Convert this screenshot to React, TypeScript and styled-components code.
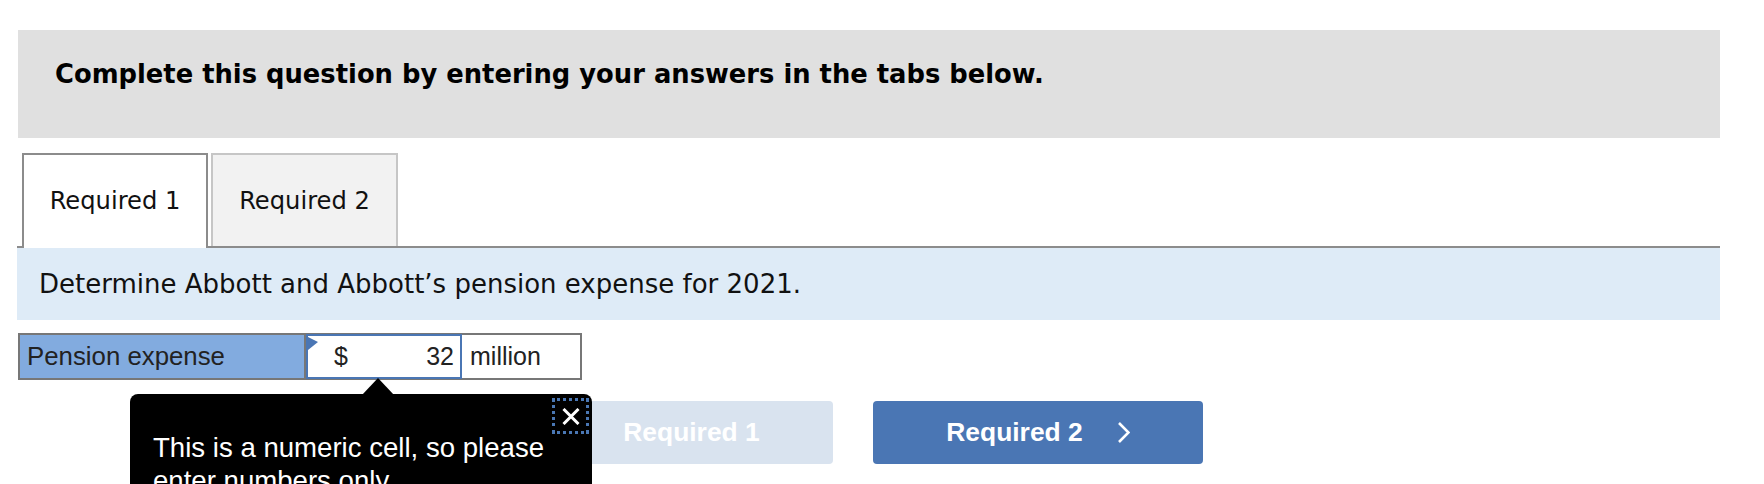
import React from 'react'
import styled, { createGlobalStyle } from 'styled-components'

const GlobalStyle = createGlobalStyle`
  html, body {
    margin: 0;
    padding: 0;
    background: #ffffff;
  }
`;

const Viewport = styled.div`
  height: 484px;
  overflow: hidden;
`;

const Page = styled.div`
  width: 1703px;
  padding: 30px 0 0 17px;
  font-family: "DejaVu Sans", Verdana, sans-serif;
`;

const Banner = styled.div`
  height: 108px;
  margin-left: 1px;
  box-sizing: border-box;
  padding: 30px 0 0 37px;
  background-color: #e0e0e0;
  font-weight: bold;
  font-size: 25.8px;
  line-height: 28px;
  color: #000;
`;

const TabBar = styled.div`
  display: flex;
  align-items: flex-end;
  gap: 3px;
  margin-top: 15px;
  padding-left: 5px;
  border-bottom: 2px solid #8c8c8c;
`;

const Tab = styled.div<{ $active?: boolean }>`
  box-sizing: border-box;
  width: ${p => (p.$active ? 186 : 187)}px;
  height: ${p => (p.$active ? 95 : 93)}px;
  margin-bottom: ${p => (p.$active ? -2 : 0)}px;
  display: flex;
  align-items: center;
  justify-content: center;
  padding-bottom: ${p => (p.$active ? 2 : 0)}px;
  border: 2px solid ${p => (p.$active ? '#8c8c8c' : '#c6c6c6')};
  border-bottom: none;
  background-color: ${p => (p.$active ? '#ffffff' : '#f2f2f2')};
  font-size: 24.2px;
  color: #111;
`;

const Instructions = styled.div`
  height: 72px;
  display: flex;
  align-items: center;
  padding-left: 22px;
  background-color: #deebf7;
  font-size: 26px;
  color: #111;
`;

const AnswerArea = styled.div`
  position: relative;
  margin: 13px 0 0 1px;
`;

const Row = styled.div`
  display: flex;
  width: 564px;
  height: 47px;
  box-sizing: border-box;
  border: 2px solid #777777;
  font-family: "Liberation Sans", Arial, sans-serif;
  font-size: 25px;
  color: #222;
`;

const LabelCell = styled.div`
  width: 286px;
  box-sizing: border-box;
  display: flex;
  align-items: center;
  padding-left: 7px;
  background-color: #82abdf;
  border-right: 2px solid #777777;
  font-size: 25.8px;
`;

const InputCell = styled.div`
  position: relative;
  width: 156px;
  margin: -1px 0;
  box-sizing: border-box;
  display: flex;
  align-items: center;
  justify-content: space-between;
  padding: 0 6px 0 26px;
  border: 2px solid #4a76b4;
  background: #ffffff;
`;

const Flag = styled.svg`
  position: absolute;
  top: 1px;
  left: 0;
`;

const UnitCell = styled.div`
  flex: 1;
  display: flex;
  align-items: center;
  padding-left: 8px;
  background: #ffffff;
`;

const Tooltip = styled.div`
  position: absolute;
  z-index: 2;
  left: 112px;
  top: 61px;
  width: 462px;
  box-sizing: border-box;
  padding: 37px 20px 30px 23px;
  border-radius: 8px;
  background: #000000;
  color: #ffffff;
  font-family: "Liberation Sans", Arial, sans-serif;
  font-size: 27.6px;
  line-height: 33px;

  &::before {
    content: "";
    position: absolute;
    left: 232px;
    top: -16px;
    border-left: 16px solid transparent;
    border-right: 16px solid transparent;
    border-bottom: 17px solid #000000;
  }
`;

const CloseBox = styled.div`
  position: absolute;
  top: 4px;
  right: 3px;
  width: 37px;
  height: 36px;
  box-sizing: border-box;
  display: flex;
  align-items: center;
  justify-content: center;
  border: 3px dotted #4a77b4;
`;

const ButtonRow = styled.div`
  display: flex;
  gap: 40px;
  margin: 21px 0 0 485px;
`;

const NavButton = styled.div<{ $disabled?: boolean }>`
  width: 330px;
  height: 63px;
  display: flex;
  align-items: center;
  justify-content: center;
  gap: 35px;
  border-radius: 4px;
  background-color: ${p => (p.$disabled ? '#d9e3ef' : '#4a76b4')};
  color: #ffffff;
  font-family: "Liberation Sans", Arial, sans-serif;
  font-weight: bold;
  font-size: 26.4px;
`;

const Chevron = ({ left }: { left?: boolean }) => (
  <svg width="12" height="21" viewBox="0 0 12 21">
    <polyline
      points={left ? '11,1 1.5,10.5 11,20' : '1,1 10.5,10.5 1,20'}
      fill="none"
      stroke="#ffffff"
      strokeWidth="2.6"
    />
  </svg>
)

export default function App() {
  return (
    <Viewport>
      <GlobalStyle />
      <Page>
        <Banner>Complete this question by entering your answers in the tabs below.</Banner>
        <TabBar>
          <Tab $active>Required 1</Tab>
          <Tab>Required 2</Tab>
        </TabBar>
        <Instructions>Determine Abbott and Abbott’s pension expense for 2021.</Instructions>
        <AnswerArea>
          <Row>
            <LabelCell>Pension expense</LabelCell>
            <InputCell>
              <Flag width="11" height="14" viewBox="0 0 11 14">
                <polygon points="0,0 10,5 0,13" fill="#4a76b4" />
              </Flag>
              <span>$</span>
              <span>32</span>
            </InputCell>
            <UnitCell>million</UnitCell>
          </Row>
          <Tooltip>
            <CloseBox>
              <svg width="18" height="17" viewBox="0 0 18 17">
                <path d="M1.5 1 L16.5 16 M16.5 1 L1.5 16" stroke="#ffffff" strokeWidth="3" />
              </svg>
            </CloseBox>
            This is a numeric cell, so please enter numbers only.
          </Tooltip>
          <ButtonRow>
            <NavButton $disabled>
              <Chevron left />
              Required 1
            </NavButton>
            <NavButton>
              Required 2
              <Chevron />
            </NavButton>
          </ButtonRow>
        </AnswerArea>
      </Page>
    </Viewport>
  )
}
